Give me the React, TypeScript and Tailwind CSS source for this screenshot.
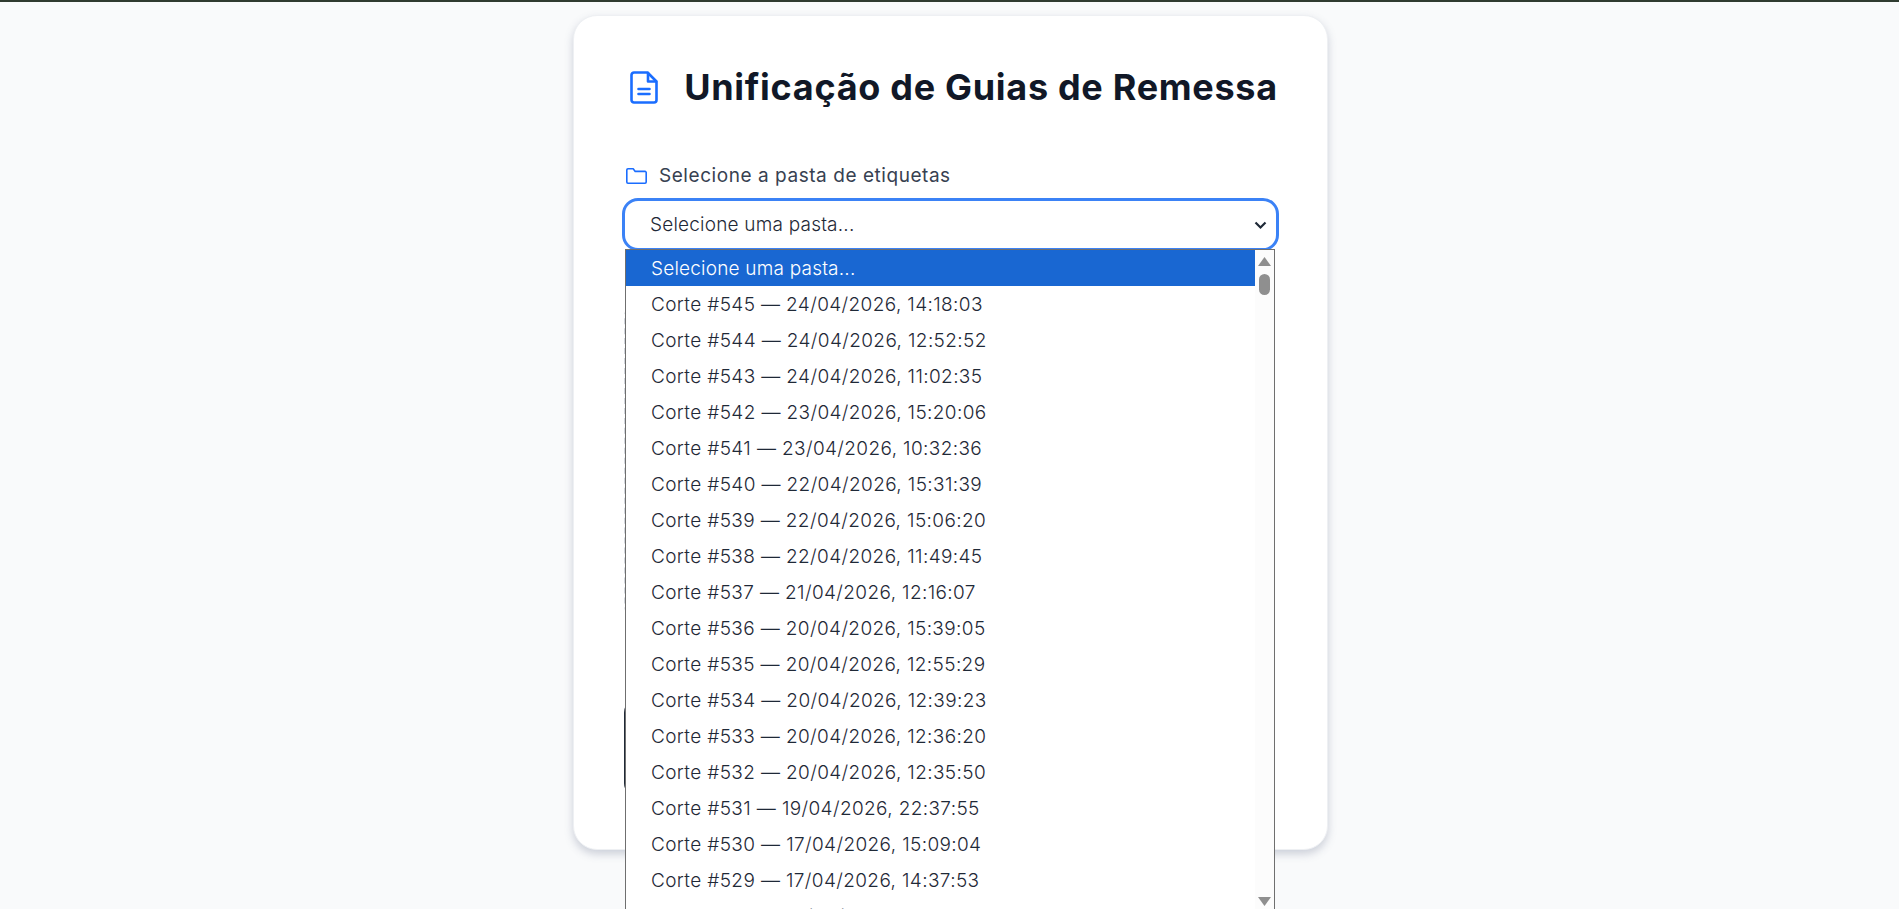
const pastas = [
  "Selecione uma pasta...",
  "Corte #545 — 24/04/2026, 14:18:03",
  "Corte #544 — 24/04/2026, 12:52:52",
  "Corte #543 — 24/04/2026, 11:02:35",
  "Corte #542 — 23/04/2026, 15:20:06",
  "Corte #541 — 23/04/2026, 10:32:36",
  "Corte #540 — 22/04/2026, 15:31:39",
  "Corte #539 — 22/04/2026, 15:06:20",
  "Corte #538 — 22/04/2026, 11:49:45",
  "Corte #537 — 21/04/2026, 12:16:07",
  "Corte #536 — 20/04/2026, 15:39:05",
  "Corte #535 — 20/04/2026, 12:55:29",
  "Corte #534 — 20/04/2026, 12:39:23",
  "Corte #533 — 20/04/2026, 12:36:20",
  "Corte #532 — 20/04/2026, 12:35:50",
  "Corte #531 — 19/04/2026, 22:37:55",
  "Corte #530 — 17/04/2026, 15:09:04",
  "Corte #529 — 17/04/2026, 14:37:53",
  "Corte #528 — 16/04/2026, 16:22:41",
];

function DocIcon() {
  return (
    <svg width="28" height="33" viewBox="0 0 28 33" fill="none" stroke="#1a6dff" strokeWidth="2.6" strokeLinejoin="round" strokeLinecap="round" className="shrink-0">
      <path d="M4 1.5h13.5l9 9V29a2.5 2.5 0 0 1-2.5 2.5H4A2.5 2.5 0 0 1 1.5 29V4A2.5 2.5 0 0 1 4 1.5z" />
      <path d="M18 2v8.5h8" />
      <path d="M8.5 18h11M8.5 23h11" />
    </svg>
  );
}

function FolderIcon() {
  return (
    <svg width="21" height="16" viewBox="0 0 21 16" fill="none" stroke="#1a6dff" strokeWidth="1.6" strokeLinejoin="round" className="shrink-0">
      <path d="M2 .8h5.2l2 2.6H19a1.2 1.2 0 0 1 1.2 1.2v9.4a1.2 1.2 0 0 1-1.2 1.2H2a1.2 1.2 0 0 1-1.2-1.2V2A1.2 1.2 0 0 1 2 .8z" />
    </svg>
  );
}

function Scrollbar() {
  return (
    <div className="relative w-[19px] shrink-0 bg-[#fcfcfc]">
      <svg width="13" height="9" viewBox="0 0 13 9" className="absolute left-[3px] top-[7px]">
        <path d="M6.5 0 13 9H0z" fill="#8f8f8f" />
      </svg>
      <div className="absolute left-[4px] top-[24px] h-[21px] w-[11px] rounded-full bg-[#8f8f8f]" />
      <svg width="13" height="9" viewBox="0 0 13 9" className="absolute left-[3px] top-[647px]">
        <path d="M6.5 9 13 0H0z" fill="#8f8f8f" />
      </svg>
    </div>
  );
}

export default function App() {
  return (
    <div className="h-screen overflow-hidden border-t-2 border-[#2f3b30] bg-[#f9fafb] font-['Inter',sans-serif]">
      <div className="ml-[573px] mt-[13px] w-[755px] rounded-[24px] border border-[#eef0f3] bg-white px-[49px] pb-[52px] pt-[47px] shadow-[0_4px_8px_rgba(100,110,140,0.3)]">
        <div className="flex h-[48px] items-center justify-center gap-[26px] pl-[7px]">
          <DocIcon />
          <h1 className="whitespace-nowrap text-[36px] font-bold tracking-[0.7px] text-[#111827]">Unificação de Guias de Remessa</h1>
        </div>

        <div className="mt-[50px] flex h-[30px] items-center gap-[12px] pl-[3px]">
          <FolderIcon />
          <span className="text-[19px] font-normal tracking-[0.55px] text-[#374151]">Selecione a pasta de etiquetas</span>
        </div>

        <div className="relative mt-[7px]">
          <div className="-mx-[1px] flex h-[53px] items-center justify-between rounded-[16px] border-[3px] border-[#3b82f6] pl-[25px] pr-[9px] pt-[2px] text-[19px] font-[350] tracking-[0.2px] text-[#1f2937]">
            <span>Selecione uma pasta...</span>
            <svg width="13" height="9" viewBox="0 0 13 9" fill="none" stroke="#1f2937" strokeWidth="2.2">
              <path d="M1.5 1.5 6.5 6.5 11.5 1.5" />
            </svg>
          </div>
          <div className="absolute left-[2px] top-[51px] z-10 flex w-[650px] border border-[#6f6f6f] bg-white text-[19px] font-[350] text-[#1f2937]">
            <div className="flex-1">
              {pastas.map((p, i) => (
                <div key={p} className={"flex h-[36px] items-center pl-[25px] pt-[3px] " + (i === 0 ? "bg-[#1967d2] tracking-[0.2px] text-white" : "tracking-[0.37px]")}>
                  {p}
                </div>
              ))}
            </div>
            <Scrollbar />
          </div>
        </div>

        <div className="ml-[1px] mt-[50px] h-[320px] w-[650px] rounded-[16px] border-2 border-dashed border-[#d1d5db]" />
        <div className="ml-[1px] mt-[78px] h-[98px] w-[650px] rounded-[14px] bg-[#1f2937]" />
      </div>
    </div>
  );
}
